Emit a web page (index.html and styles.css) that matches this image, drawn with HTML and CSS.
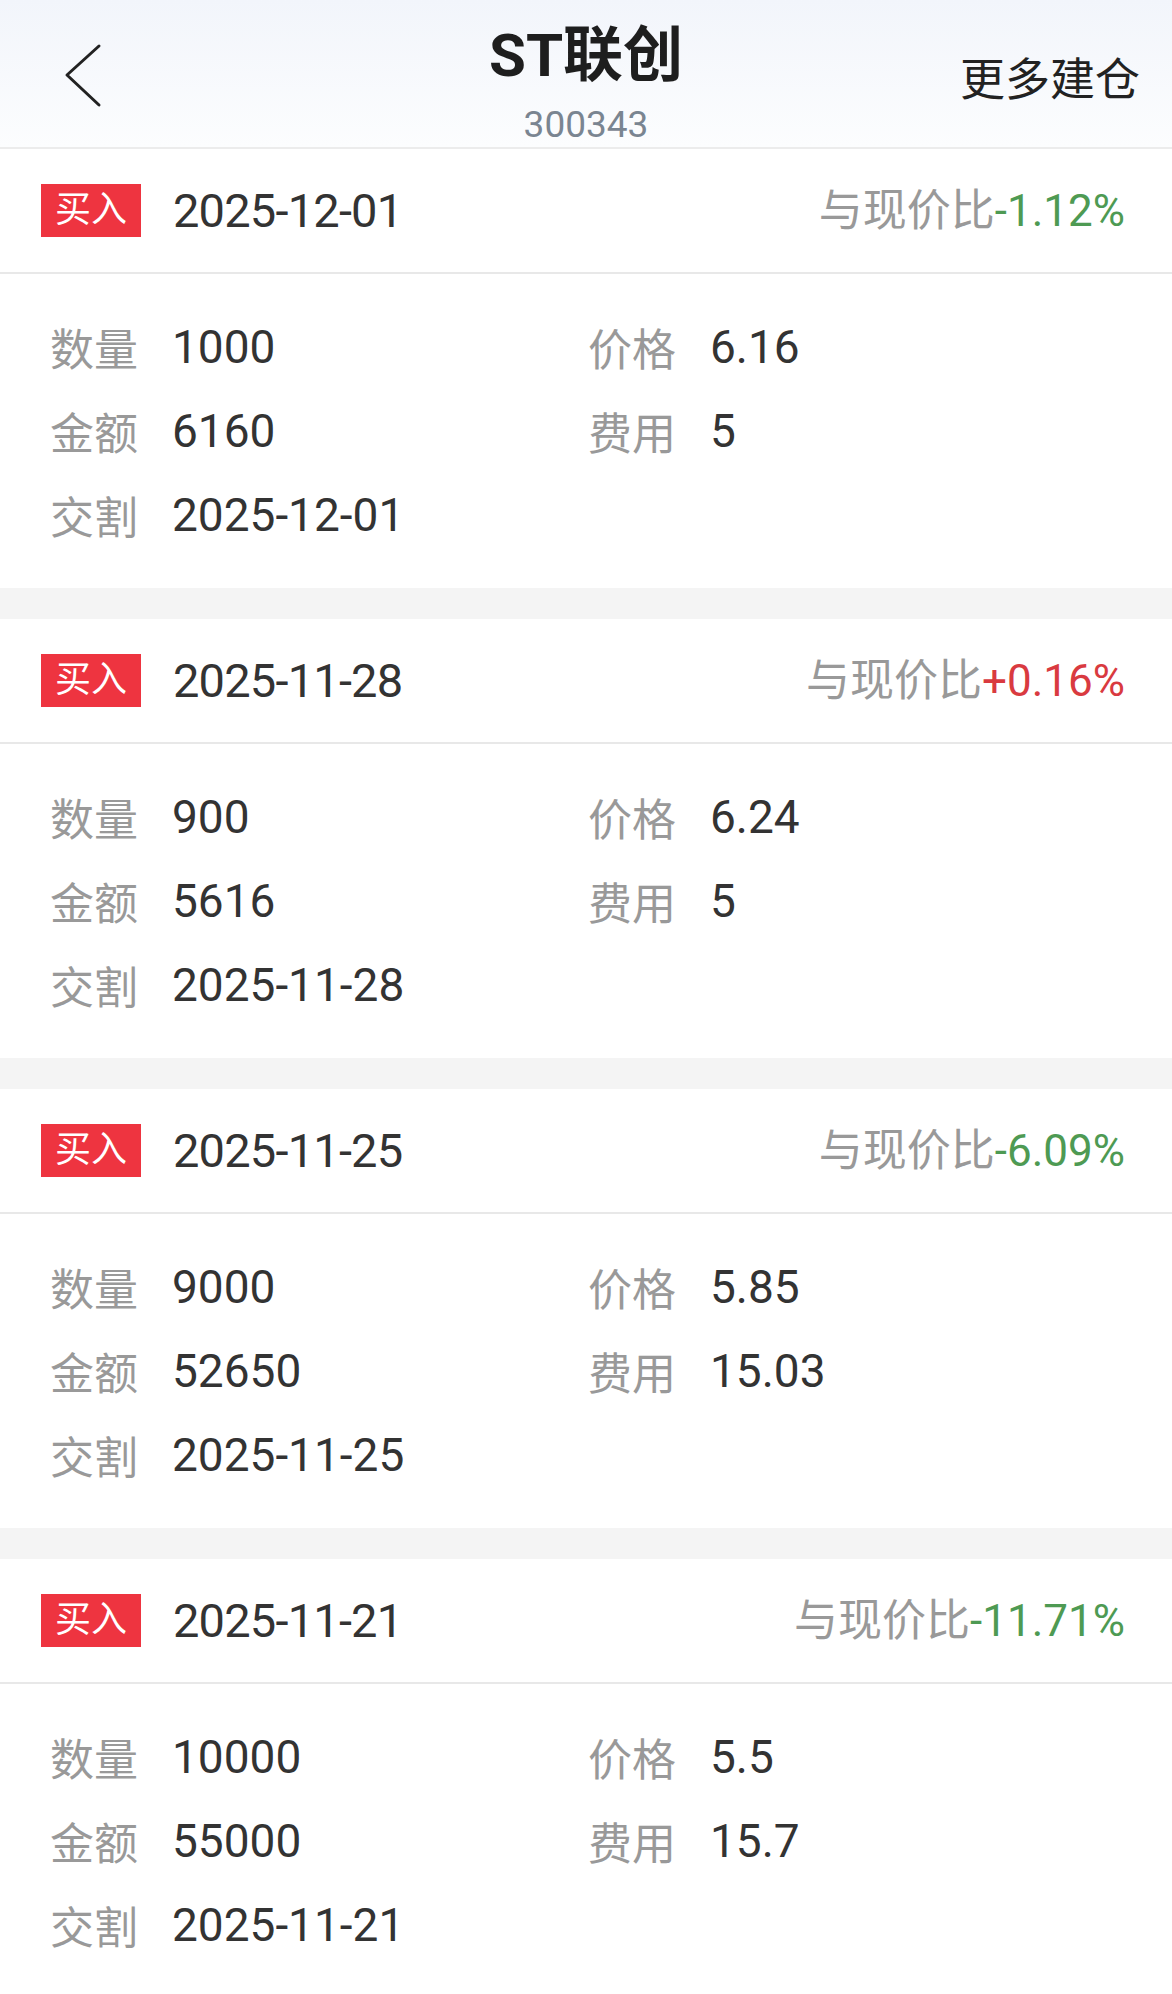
FILE: index.html
```html
<!DOCTYPE html>
<html lang="zh-CN">
<head>
<meta charset="UTF-8">
<meta name="viewport" content="width=device-width, initial-scale=1">
<title>ST联创 建仓记录</title>
<link rel="stylesheet" href="styles.css">
</head>
<body>
<!-- Top bar -->
<div class="topbar">
  <div class="back">
    <svg width="40" height="66" viewBox="0 0 40 66"><polyline points="35,3 3,32 35,62" fill="none" stroke="#222" stroke-width="3" stroke-linecap="round" stroke-linejoin="round"/></svg>
  </div>
  <div class="title-box">
    <div class="title">ST联创</div>
    <div class="code">300343</div>
  </div>
  <div class="more">更多建仓</div>
</div>

<div class="list">
  <div class="card">
    <div class="card-head">
      <span class="badge">买入</span>
      <span class="date">2025-12-01</span>
      <span class="ratio">与现价比<span class="down">-1.12%</span></span>
    </div>
    <div class="card-body">
      <div class="cell"><span class="label">数量</span><span class="value">1000</span></div>
      <div class="cell"><span class="label">价格</span><span class="value">6.16</span></div>
      <div class="cell"><span class="label">金额</span><span class="value">6160</span></div>
      <div class="cell"><span class="label">费用</span><span class="value">5</span></div>
      <div class="cell"><span class="label">交割</span><span class="value">2025-12-01</span></div>
    </div>
  </div>

  <div class="card">
    <div class="card-head">
      <span class="badge">买入</span>
      <span class="date">2025-11-28</span>
      <span class="ratio">与现价比<span class="up">+0.16%</span></span>
    </div>
    <div class="card-body">
      <div class="cell"><span class="label">数量</span><span class="value">900</span></div>
      <div class="cell"><span class="label">价格</span><span class="value">6.24</span></div>
      <div class="cell"><span class="label">金额</span><span class="value">5616</span></div>
      <div class="cell"><span class="label">费用</span><span class="value">5</span></div>
      <div class="cell"><span class="label">交割</span><span class="value">2025-11-28</span></div>
    </div>
  </div>

  <div class="card">
    <div class="card-head">
      <span class="badge">买入</span>
      <span class="date">2025-11-25</span>
      <span class="ratio">与现价比<span class="down">-6.09%</span></span>
    </div>
    <div class="card-body">
      <div class="cell"><span class="label">数量</span><span class="value">9000</span></div>
      <div class="cell"><span class="label">价格</span><span class="value">5.85</span></div>
      <div class="cell"><span class="label">金额</span><span class="value">52650</span></div>
      <div class="cell"><span class="label">费用</span><span class="value">15.03</span></div>
      <div class="cell"><span class="label">交割</span><span class="value">2025-11-25</span></div>
    </div>
  </div>

  <div class="card">
    <div class="card-head">
      <span class="badge">买入</span>
      <span class="date">2025-11-21</span>
      <span class="ratio">与现价比<span class="down">-11.71%</span></span>
    </div>
    <div class="card-body">
      <div class="cell"><span class="label">数量</span><span class="value">10000</span></div>
      <div class="cell"><span class="label">价格</span><span class="value">5.5</span></div>
      <div class="cell"><span class="label">金额</span><span class="value">55000</span></div>
      <div class="cell"><span class="label">费用</span><span class="value">15.7</span></div>
      <div class="cell"><span class="label">交割</span><span class="value">2025-11-21</span></div>
    </div>
  </div>
</div>
</body>
</html>
```

FILE: styles.css
```css
body {
  margin: 0;
  background-color: #f4f4f4;
  font-family: Roboto, "Noto Sans CJK SC", sans-serif;
  color: #333;
}

/* Top bar */
.topbar {
  height: 147px;
  display: grid;
  grid-template-columns: 1fr auto 1fr;
  align-items: center;
  background: linear-gradient(#f2f5fb, #fcfdfe);
  border-bottom: 2px solid #ececec;
}
.back {
  padding-left: 64px;
  display: flex;
  align-items: center;
  padding-top: 4px;
}
.title-box {
  align-self: start;
  padding-top: 21px;
  text-align: center;
}
.title {
  font-size: 60px;
  font-weight: 700;
  line-height: 70px;
  color: #1e1e1e;
}
.code {
  font-size: 37px;
  line-height: 37px;
  margin-top: 15px;
  color: #7a8591;
}
.more {
  justify-self: end;
  padding-right: 32px;
  padding-top: 6px;
  font-size: 45px;
  color: #222;
}

/* Cards */
.card {
  background-color: #fff;
  margin-bottom: 31px;
}
.card-head {
  height: 123px;
  display: flex;
  align-items: center;
  padding: 0 47px 0 41px;
  border-bottom: 2px solid #e8e8e8;
}
.badge {
  width: 100px;
  height: 53px;
  line-height: 53px;
  text-align: center;
  background-color: #ee3440;
  color: #fff;
  font-size: 36px;
}
.date {
  margin-left: 32px;
  font-size: 47px;
  letter-spacing: -0.8px;
  color: #333;
}
.ratio {
  margin-left: auto;
  margin-bottom: 8px;
  font-size: 44px;
  color: #999;
}
.down {
  color: #4e9a53;
}
.up {
  color: #d93a40;
}
.card-body {
  display: grid;
  grid-template-columns: 538px 1fr;
  grid-auto-rows: 84px;
  padding: 31px 0 31px 50px;
}
.cell {
  display: flex;
  align-items: center;
  gap: 34px;
}
.label {
  font-size: 44px;
  color: #999;
}
.value {
  font-size: 46px;
  color: #333;
}
```
